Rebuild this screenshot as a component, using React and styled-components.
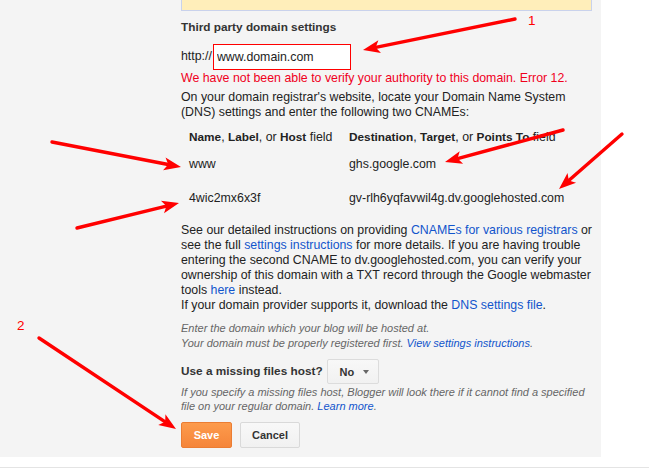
import styled, { createGlobalStyle } from "styled-components";

const GlobalStyle = createGlobalStyle`
  html, body {
    margin: 0;
    padding: 0;
    background: #ffffff;
  }
  body {
    font-family: "Liberation Sans", Arial, sans-serif;
    color: #222;
  }
`;

const Page = styled.div`
  position: relative;
  width: 649px;
  height: 471px;
  overflow: hidden;
`;

const Panel = styled.div`
  width: 601px;
  height: 457px;
  box-sizing: border-box;
  padding-left: 181px;
  background: #f4f4f4;
`;

const Column = styled.div`
  width: 420px;
  font-size: 12.35px;
`;

const Notice = styled.div`
  width: 409px;
  height: 10px;
  background: #ffeeba;
  border: 1px solid #c9d2ec;
  border-top: none;
`;

const Heading = styled.div`
  margin-top: 8px;
  font-size: 11.8px;
  line-height: 16px;
  font-weight: bold;
  color: #333;
`;

const DomainRow = styled.div`
  margin-top: 9px;
  display: flex;
  align-items: center;
  gap: 1px;
`;

const Prefix = styled.span`
  line-height: 15px;
  margin-top: -2px;
`;

const DomainInput = styled.input`
  box-sizing: border-box;
  width: 138px;
  height: 26px;
  margin: 0;
  padding: 0 3px;
  border: 1px solid #f00;
  background: #fff;
  font-family: inherit;
  font-size: 12.35px;
  color: #222;
  outline: none;
`;

const ErrorText = styled.div`
  margin-top: 1px;
  line-height: 15px;
  color: #f0001c;
  white-space: nowrap;
`;

const Paragraph = styled.div`
  margin-top: ${(p) => p.$top || 0}px;
  line-height: 15px;
  white-space: nowrap;
`;

const RecordTable = styled.div`
  margin-top: 10px;
  padding-left: 8px;
  display: grid;
  grid-template-columns: 160px auto;
  line-height: 15px;
`;

const Cell = styled.div`
  margin-top: ${(p) => p.$top || 0}px;
  white-space: nowrap;
  b {
    font-weight: bold;
    font-size: 11.8px;
  }
`;

const Link = styled.a`
  color: #1155cc;
  text-decoration: none;
`;

const Hint = styled.div`
  margin-top: ${(p) => p.$top || 0}px;
  font-size: 11px;
  font-style: italic;
  line-height: ${(p) => p.$lh || 15}px;
  color: #666;
  white-space: nowrap;
`;

const HostRow = styled.div`
  margin-top: 8px;
  display: flex;
  align-items: center;
  gap: 4px;
`;

const HostLabel = styled.span`
  font-size: 11.8px;
  font-weight: bold;
  color: #333;
  margin-top: -2px;
`;

const Select = styled.div`
  box-sizing: border-box;
  width: 52px;
  height: 25px;
  padding-left: 12px;
  display: flex;
  align-items: center;
  gap: 9px;
  border: 1px solid #dcdcdc;
  border-radius: 2px;
  background: linear-gradient(#f8f8f8, #f1f1f1);
  font-size: 11px;
  font-weight: bold;
  color: #333;
`;

const Caret = styled.span`
  width: 0;
  height: 0;
  margin-top: 1px;
  border-left: 3.5px solid transparent;
  border-right: 3.5px solid transparent;
  border-top: 4px solid #666;
`;

const Actions = styled.div`
  margin-top: 9px;
  display: flex;
  gap: 8px;
`;

const Button = styled.button`
  box-sizing: border-box;
  height: 26px;
  width: ${(p) => p.$w}px;
  margin: 0;
  padding: 0;
  border-radius: 2px;
  font-family: inherit;
  font-size: 11px;
  font-weight: bold;
  cursor: pointer;
  ${(p) =>
    p.$primary
      ? `background: linear-gradient(#fd9b4c, #f5853a);
         border: 1px solid #eb7d33;
         color: #fff;`
      : `background: linear-gradient(#f8f8f8, #f1f1f1);
         border: 1px solid #d9d9d9;
         color: #333;`}
`;

const Divider = styled.div`
  margin-top: 10px;
  height: 1px;
  background: #e4e4e4;
`;

const Annotations = styled.svg`
  position: absolute;
  left: 0;
  top: 0;
  pointer-events: none;
`;

const Mark = styled.text`
  font-family: "Liberation Sans", Arial, sans-serif;
  font-size: 13.5px;
  fill: #f00;
`;

const arrows = [
  [515, 19, 363, 50],
  [52, 142, 181, 167],
  [77, 228, 179, 203],
  [563, 130, 445, 162],
  [622, 134, 559, 189],
  [39, 338, 176, 429],
];

const Arrow = ({ x1, y1, x2, y2 }) => {
  const dx = x2 - x1;
  const dy = y2 - y1;
  const len = Math.hypot(dx, dy);
  const ux = dx / len;
  const uy = dy / len;
  const nx = -uy;
  const ny = ux;
  const L = 17;
  const W = 6.5;
  const bx = x2 - ux * L;
  const by = y2 - uy * L;
  const nxp = x2 - ux * (L - 4);
  const nyp = y2 - uy * (L - 4);
  const head = [
    [x2, y2],
    [bx + nx * W, by + ny * W],
    [nxp, nyp],
    [bx - nx * W, by - ny * W],
  ]
    .map((p) => p.join(","))
    .join(" ");
  return (
    <g>
      <line
        x1={x1}
        y1={y1}
        x2={nxp}
        y2={nyp}
        stroke="#f00"
        strokeWidth="3.4"
        strokeLinecap="round"
      />
      <polygon points={head} fill="#f00" />
    </g>
  );
};

export default function App() {
  return (
    <>
      <GlobalStyle />
      <Page>
        <Panel>
          <Column>
            <Notice />
            <Heading>Third party domain settings</Heading>
            <DomainRow>
              <Prefix>http://</Prefix>
              <DomainInput defaultValue="www.domain.com" />
            </DomainRow>
            <ErrorText>
              We have not been able to verify your authority to this domain. Error 12.
            </ErrorText>
            <Paragraph $top={4}>
              On your domain registrar's website, locate your Domain Name System
              <br />
              (DNS) settings and enter the following two CNAMEs:
            </Paragraph>
            <RecordTable>
              <Cell>
                <b>Name</b>, <b>Label</b>, or <b>Host</b> field
              </Cell>
              <Cell>
                <b>Destination</b>, <b>Target</b>, or <b>Points To</b> field
              </Cell>
              <Cell $top={12}>www</Cell>
              <Cell $top={12}>ghs.google.com</Cell>
              <Cell $top={19}>4wic2mx6x3f</Cell>
              <Cell $top={19}>gv-rlh6yqfavwil4g.dv.googlehosted.com</Cell>
            </RecordTable>
            <Paragraph $top={17}>
              See our detailed instructions on providing{" "}
              <Link href="#">CNAMEs for various registrars</Link> or
              <br />
              see the full <Link href="#">settings instructions</Link> for more
              details. If you are having trouble
              <br />
              entering the second CNAME to dv.googlehosted.com, you can verify your
              <br />
              ownership of this domain with a TXT record through the Google webmaster
              <br />
              tools <Link href="#">here</Link> instead.
              <br />
              If your domain provider supports it, download the{" "}
              <Link href="#">DNS settings file</Link>.
            </Paragraph>
            <Hint $top={8}>
              Enter the domain which your blog will be hosted at.
              <br />
              Your domain must be properly registered first.{" "}
              <Link href="#">View settings instructions</Link>.
            </Hint>
            <HostRow>
              <HostLabel>Use a missing files host?</HostLabel>
              <Select>
                No
                <Caret />
              </Select>
            </HostRow>
            <Hint $top={1} $lh={14}>
              If you specify a missing files host, Blogger will look there if it
              cannot find a specified
              <br />
              file on your regular domain. <Link href="#">Learn more</Link>.
            </Hint>
            <Actions>
              <Button $primary $w={51}>
                Save
              </Button>
              <Button $w={60}>Cancel</Button>
            </Actions>
          </Column>
        </Panel>
        <Divider />
        <Annotations width="649" height="471" viewBox="0 0 649 471">
          {arrows.map(([x1, y1, x2, y2], i) => (
            <Arrow key={i} x1={x1} y1={y1} x2={x2} y2={y2} />
          ))}
          <Mark x="528" y="25">
            1
          </Mark>
          <Mark x="17" y="330">
            2
          </Mark>
        </Annotations>
      </Page>
    </>
  );
}
